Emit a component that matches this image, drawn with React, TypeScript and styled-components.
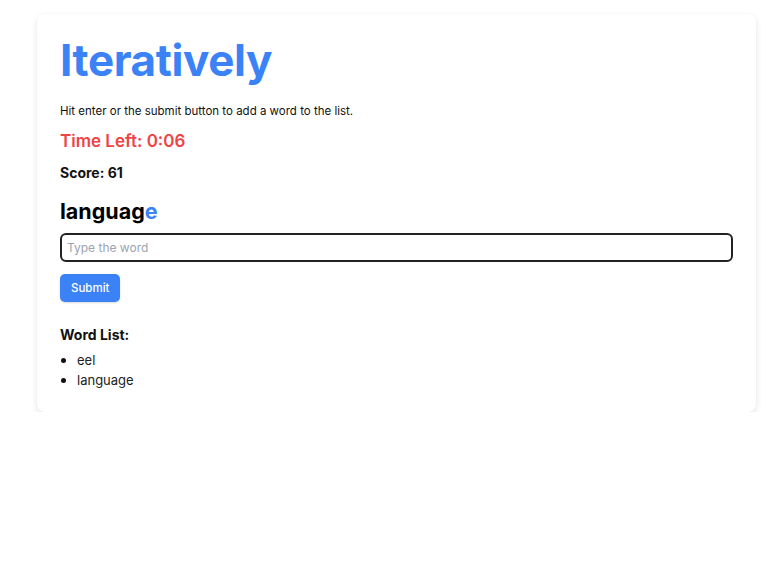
import React, { useState } from "react";
import styled, { createGlobalStyle } from "styled-components";

const GlobalStyle = createGlobalStyle`
  body {
    margin: 0;
    background: #ffffff;
    font-family: Inter, "Noto Sans", sans-serif;
    color: #111111;
  }
`;

const Card = styled.div`
  margin: 14px 25px 0 37px;
  padding: 20px 23px 22px 23px;
  background: #ffffff;
  border-radius: 8px;
  box-shadow: 0 3px 7px rgba(0, 0, 0, 0.1), 0 0 2px rgba(0, 0, 0, 0.04);
`;

const Title = styled.h1`
  margin: 0;
  font-size: 44px;
  line-height: 52px;
  font-weight: 700;
  color: #3b82f6;
  letter-spacing: -0.4px;
`;

const Hint = styled.p`
  margin: 17px 0 0;
  font-size: 11.5px;
  line-height: 16px;
  color: #111111;
`;

const Timer = styled.h2`
  margin: 10px 0 0;
  font-size: 17px;
  line-height: 24px;
  font-weight: 600;
  color: #ef4444;
`;

const Score = styled.h3`
  margin: 10px 0 0;
  font-size: 14px;
  line-height: 20px;
  font-weight: 700;
`;

const Word = styled.h2`
  margin: 14px 0 0;
  font-size: 21.5px;
  line-height: 28px;
  font-weight: 700;
  color: #000000;
`;

const Typed = styled.span<{ $next?: boolean }>`
  color: ${(p) => (p.$next ? "#3b82f6" : "#000000")};
`;

const Input = styled.input`
  display: block;
  box-sizing: border-box;
  width: 100%;
  height: 29px;
  margin-top: 8px;
  padding: 0 5px;
  border: 2px solid #222222;
  border-radius: 6px;
  font-family: inherit;
  font-size: 12px;
  outline: none;
  &::placeholder {
    color: #9ca3af;
  }
`;

const Button = styled.button`
  display: block;
  margin-top: 12px;
  height: 28px;
  padding: 0 11px;
  border: none;
  border-radius: 5px;
  background: #3b82f6;
  color: #ffffff;
  font-family: inherit;
  font-size: 11.5px;
  font-weight: 500;
  box-shadow: 0 1px 2px rgba(0, 0, 0, 0.15);
`;

const ListTitle = styled.h3`
  margin: 23px 0 0;
  font-size: 14px;
  line-height: 20px;
  font-weight: 700;
`;

const List = styled.ul`
  margin: 5px 0 0;
  padding-left: 17px;
  font-size: 13px;
  line-height: 20px;
  color: #222222;
  list-style: none;
`;

const Item = styled.li`
  position: relative;
  &::before {
    content: "";
    position: absolute;
    left: -16px;
    top: 8px;
    width: 5px;
    height: 5px;
    border-radius: 50%;
    background: #111111;
  }
`;

export default function App() {
  const [value, setValue] = useState("");
  const words = ["eel", "language"];
  return (
    <>
      <GlobalStyle />
      <Card>
        <Title>Iteratively</Title>
        <Hint>Hit enter or the submit button to add a word to the list.</Hint>
        <Timer>Time Left: 0:06</Timer>
        <Score>Score: 61</Score>
        <Word>
          <Typed>languag</Typed>
          <Typed $next>e</Typed>
        </Word>
        <Input
          placeholder="Type the word"
          value={value}
          onChange={(e) => setValue(e.target.value)}
        />
        <Button>Submit</Button>
        <ListTitle>Word List:</ListTitle>
        <List>
          {words.map((w) => (
            <Item key={w}>{w}</Item>
          ))}
        </List>
      </Card>
    </>
  );
}
